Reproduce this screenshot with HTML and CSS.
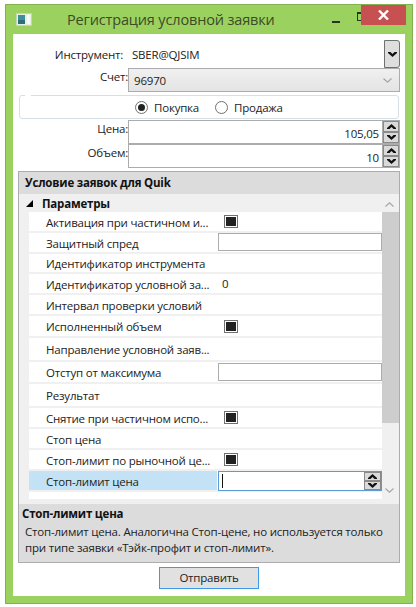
FILE: index.html
```html
<!DOCTYPE html>
<html>
<head>
<meta charset="utf-8">
<title>Регистрация условной заявки</title>
<link rel="stylesheet" href="styles.css">
</head>
<body>
<svg class="defs" width="0" height="0">
  <symbol id="up" viewBox="0 0 9 5"><path d="M4.5 0 L9 4 L9 5 L6.5 5 L4.5 3 L2.5 5 L0 5 L0 4 Z" fill="#111"/></symbol>
  <symbol id="down" viewBox="0 0 9 5"><path d="M0 0 L2.5 0 L4.5 2 L6.5 0 L9 0 L9 1 L4.5 5 L0 1 Z" fill="#111"/></symbol>
  <symbol id="thin-up" viewBox="0 0 9 5"><path d="M0.5 4.5 L4.5 0.8 L8.5 4.5" fill="none" stroke="#a6a6a6" stroke-width="1.2"/></symbol>
  <symbol id="thin-down" viewBox="0 0 9 5"><path d="M0.5 0.5 L4.5 4.2 L8.5 0.5" fill="none" stroke="#a6a6a6" stroke-width="1.2"/></symbol>
</svg>
<div class="window">
  <div class="titlebar">
    <svg class="app-icon" width="16" height="13" viewBox="0 0 16 13">
      <rect width="16" height="13" fill="#c4d6b8"/>
      <rect x="1" y="1" width="14" height="11" fill="#e8efe4"/>
      <rect x="2" y="2" width="7" height="9" fill="#3f8f98"/>
      <rect x="2" y="7" width="7" height="4" fill="#2f6e78"/>
      <rect x="11" y="2" width="3" height="9" fill="#f7faf5"/>
    </svg>
    <div class="title">Регистрация условной заявки</div>
    <div class="min-btn"></div>
    <div class="max-btn"></div>
    <div class="close-btn">
      <svg width="11" height="10" viewBox="0 0 11 10"><path d="M1 0.5 L10 9.5 M10 0.5 L1 9.5" stroke="#fff" stroke-width="2.4" fill="none"/></svg>
    </div>
  </div>
  <div class="client">
    <div class="row row-instr">
      <div class="lbl">Инструмент:</div>
      <div class="instr-val">SBER@QJSIM</div>
      <div class="instr-btn"><svg class="ar" width="9" height="5"><use href="#down"/></svg></div>
    </div>
    <div class="row row-schet">
      <div class="lbl lbl-top">Счет:</div>
      <div class="combo">
        <span>96970</span>
        <svg width="9" height="5"><use href="#thin-down"/></svg>
      </div>
    </div>
    <div class="radios">
      <span class="radio on"></span><span class="radio-txt first">Покупка</span>
      <span class="radio"></span><span class="radio-txt">Продажа</span>
    </div>
    <div class="row row-num">
      <div class="lbl lbl-top">Цена:</div>
      <div class="num">
        <div class="num-val">105,05</div>
        <div class="spin">
          <div class="spin-btn"><svg width="9" height="5"><use href="#up"/></svg></div>
          <div class="spin-btn"><svg width="9" height="5"><use href="#down"/></svg></div>
        </div>
      </div>
    </div>
    <div class="row row-num">
      <div class="lbl lbl-top">Объем:</div>
      <div class="num">
        <div class="num-val">10</div>
        <div class="spin">
          <div class="spin-btn"><svg width="9" height="5"><use href="#up"/></svg></div>
          <div class="spin-btn"><svg width="9" height="5"><use href="#down"/></svg></div>
        </div>
      </div>
    </div>

    <div class="pgrid">
      <div class="pg-head">Условие заявок для Quik</div>
      <div class="pg-cat">
        <svg class="cat-arrow" width="7" height="7" viewBox="0 0 7 7"><path d="M7 0 V7 H0 Z"/></svg>
        <span>Параметры</span>
        <svg class="sb-up" width="9" height="5"><use href="#thin-up"/></svg>
      </div>
      <div class="pg-body">
        <div class="pg-rows">
          <div class="prow h21"><div class="pname">Активация при частичном и...</div><div class="pval"><span class="check"></span></div></div>
          <div class="prow h21"><div class="pname">Защитный спред</div><div class="pval"><div class="tbox"></div></div></div>
          <div class="prow h20"><div class="pname">Идентификатор инструмента</div><div class="pval"></div></div>
          <div class="prow h21"><div class="pname">Идентификатор условной за...</div><div class="pval"><span class="ptext">0</span></div></div>
          <div class="prow h21"><div class="pname">Интервал проверки условий</div><div class="pval"></div></div>
          <div class="prow h22"><div class="pname">Исполненный объем</div><div class="pval"><span class="check"></span></div></div>
          <div class="prow h24"><div class="pname">Направление условной заяв...</div><div class="pval"></div></div>
          <div class="prow h22"><div class="pname">Отступ от максимума</div><div class="pval"><div class="tbox"></div></div></div>
          <div class="prow h24"><div class="pname">Результат</div><div class="pval"></div></div>
          <div class="prow h21"><div class="pname">Снятие при частичном испо...</div><div class="pval"><span class="check"></span></div></div>
          <div class="prow h21"><div class="pname">Стоп цена</div><div class="pval"></div></div>
          <div class="prow h21"><div class="pname">Стоп-лимит по рыночной це...</div><div class="pval"><span class="check"></span></div></div>
          <div class="prow h21 selected"><div class="pname">Стоп-лимит цена</div><div class="pval">
            <div class="tbox focus">
              <span class="caret"></span>
              <div class="spin spin-small">
                <div class="spin-btn"><svg width="9" height="5"><use href="#up"/></svg></div>
                <div class="spin-btn"><svg width="9" height="5"><use href="#down"/></svg></div>
              </div>
            </div>
          </div></div>
          <div class="prow h7"><div class="pname"></div><div class="pval"></div></div>
        </div>
        <div class="scrollbar">
          <div class="thumb"></div>
          <svg class="sb-down" width="9" height="5"><use href="#thin-down"/></svg>
        </div>
      </div>
      <div class="pg-desc">
        <div class="desc-title">Стоп-лимит цена</div>
        <div class="desc-text">Стоп-лимит цена. Аналогична Стоп-цене, но используется только при типе заявки «Тэйк-профит и стоп-лимит».</div>
      </div>
    </div>

    <div class="footer"><div class="send">Отправить</div></div>
  </div>
</div>
</body>
</html>
```

FILE: styles.css
```css
* {
	box-sizing: border-box;
}
html, body {
	margin: 0;
	background: #fff;
}
body {
	width: 416px;
	height: 607px;
	padding: 4px 3px 3px 5px;
	overflow: hidden;
	font-family: "Open Sans", "Noto Sans", sans-serif;
	font-size: 11.5px;
	letter-spacing: -0.2px;
	color: #222;
}
.defs {
	position: absolute;
}
.window {
	width: 408px;
	height: 600px;
	background: #9bd25f;
	border: 1px solid #85b050;
	display: flex;
	flex-direction: column;
	padding: 0 7px 7px 7px;
}

/* title bar */
.titlebar {
	height: 29px;
	display: flex;
	position: relative;
	flex: none;
}
.app-icon {
	margin: 8px 0 0 3px;
}
.title {
	margin: 4px 0 0 35px;
	font-size: 14.5px;
	letter-spacing: -0.15px;
	line-height: 22px;
	color: #3d4a28;
	width: 262px;
	white-space: nowrap;
}
.min-btn {
	width: 8px;
	height: 2px;
	background: #2b3320;
	margin: 16px 0 0 3px;
	flex: none;
}
.max-btn {
	width: 10px;
	height: 9px;
	border: 1px solid #2b3320;
	border-top-width: 2px;
	margin: 7px 0 0 17px;
	flex: none;
}
.close-btn {
	position: absolute;
	top: 0;
	right: -1px;
	width: 45px;
	height: 20px;
	background: #c75050;
	display: flex;
	align-items: center;
	justify-content: center;
}

.client {
	flex: 1;
	background: #fff;
	padding: 6px 5px 0 5px;
	display: flex;
	flex-direction: column;
}
.row {
	display: flex;
	flex: none;
}
.lbl {
	width: 110px;
	text-align: right;
	flex: none;
}
.row-instr {
	height: 28px;
	align-items: center;
}
.row-instr .lbl {
	margin-right: 9px;
	width: 105px;
}
.instr-val {
	flex: 1;
}
.instr-btn {
	width: 16px;
	height: 28px;
	background: #dedede;
	border: 1px solid #707070;
	border-radius: 0 3px 3px 0;
	display: flex;
	align-items: center;
	justify-content: center;
}
.lbl-top {
	padding-top: 1px;
	line-height: 16px;
}
.row-schet {
	height: 24px;
}
.combo {
	width: 272px;
	height: 24px;
	border: 1px solid #acacac;
	background: linear-gradient(#f0f0f0, #e4e4e4);
	display: flex;
	align-items: center;
	justify-content: space-between;
	padding: 0 7px 0 5px;
}
.radios {
	flex: none;
	position: relative;
	width: 380px;
	height: 24px;
	margin: 3px 0 1px 1px;
	border: 1px solid #d5dfe5;
	border-radius: 3px;
	display: flex;
	align-items: center;
	padding-left: 115px;
}
/* empty group box header leaves a gap in the frame */
.radios::before {
	content: "";
	position: absolute;
	top: -1px;
	left: 5px;
	width: 6px;
	height: 1px;
	background: #fff;
}
.radio {
	width: 13px;
	height: 13px;
	border: 1px solid #707070;
	border-radius: 50%;
	background: #fff;
	display: flex;
	align-items: center;
	justify-content: center;
}
.radio.on::after {
	content: "";
	width: 7px;
	height: 7px;
	border-radius: 50%;
	background: #222;
}
.radio-txt {
	margin-left: 6px;
}
.radio-txt.first {
	width: 61px;
}
.row-num {
	height: 24px;
}
.num {
	width: 272px;
	height: 24px;
	border: 1px solid #acacac;
	display: flex;
}
.num-val {
	flex: 1;
	text-align: right;
	padding: 4px 3px 0 0;
	line-height: 18px;
}
.spin {
	width: 17px;
	display: flex;
	flex-direction: column;
	flex: none;
	border-left: 1px solid #acacac;
}
.spin-btn {
	flex: 1;
	background: #dadada;
	border: 1px solid #8a8a8a;
	display: flex;
	align-items: center;
	justify-content: center;
}

/* property grid */
.pgrid {
	flex: none;
	width: 382px;
	height: 392px;
	margin-top: 3px;
	border: 1px solid #acacb0;
	display: flex;
	flex-direction: column;
	background: #f0f0f0;
}
.pg-head {
	height: 22px;
	flex: none;
	background: #dcdcdc;
	font-weight: 700;
	padding-left: 6px;
	line-height: 22px;
	color: #111;
}
.pg-cat {
	height: 18px;
	flex: none;
	display: flex;
	align-items: center;
	font-weight: 700;
	color: #111;
	position: relative;
}
.cat-arrow {
	margin-left: 7px;
	margin-right: 9px;
}
.sb-up {
	position: absolute;
	right: 5px;
	top: 8px;
}
.pg-body {
	flex: 1;
	display: flex;
	min-height: 0;
}
.pg-rows {
	width: 363px;
	padding-left: 10px;
	flex: none;
}
.prow {
	display: flex;
	background: #fff;
	border-bottom: 2px solid #f0f0f0;
}
.h7 { height: 7px; border-bottom: 0; }
.h20 { height: 20px; }
.h21 { height: 21px; }
.h22 { height: 22px; }
.h24 { height: 24px; }
.pname {
	width: 188px;
	padding: 1px 0 0 17px;
	display: flex;
	align-items: center;
	white-space: nowrap;
	overflow: hidden;
	flex: none;
}
.pval {
	flex: 1;
	margin-left: 1px;
	background: #fff;
	display: flex;
	align-items: center;
	min-width: 0;
}
.selected .pname {
	background: #c3e2f5;
}
.check {
	width: 14px;
	height: 13px;
	margin-left: 6px;
	border: 1px solid #707070;
	background: #fff;
	display: flex;
	align-items: center;
	justify-content: center;
}
.check::after {
	content: "";
	width: 10px;
	height: 9px;
	background: #222;
}
.ptext {
	margin-left: 4px;
}
.tbox {
	width: 100%;
	height: 18px;
	margin-top: -1px;
	border: 1px solid #acacac;
	background: #fff;
}
.tbox.focus {
	height: 20px;
	margin-top: 0;
	border-color: #5a9bd5;
	display: flex;
	align-items: center;
	justify-content: space-between;
}
.caret {
	width: 1px;
	height: 14px;
	background: #111;
	margin-left: 3px;
}
.spin-small {
	height: 18px;
	border-left: 0;
}
.scrollbar {
	flex: 1;
	position: relative;
}
.thumb {
	height: 211px;
	background: #cdcdcd;
}
.sb-down {
	position: absolute;
	right: 5px;
	top: 276px;
}

.pg-desc {
	height: 58px;
	flex: none;
	margin-top: 5px;
	background: #dcdcdc;
	padding-left: 3px;
	color: #111;
}
.desc-title {
	font-weight: 700;
	line-height: 16px;
	padding-top: 2px;
	height: 20px;
}
.desc-text {
	padding: 0 3px;
	line-height: 16px;
	color: #222;
}

.footer {
	flex: none;
	display: flex;
	justify-content: center;
	margin-top: 4px;
}
.send {
	width: 100px;
	height: 22px;
	border: 1px solid #3c9ae8;
	background: #e1e1e1;
	text-align: center;
	line-height: 20px;
}
```
